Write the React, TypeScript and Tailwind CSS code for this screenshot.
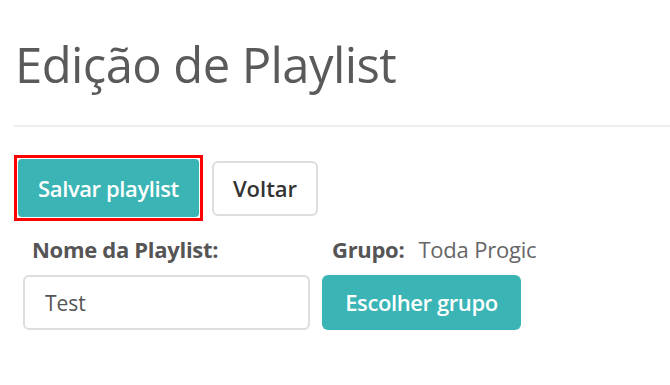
export default function App() {
  return (
    <div
      className="w-[670px] h-[385px] bg-white overflow-hidden text-[#555]"
      style={{ fontFamily: '"Open Sans", "Noto Sans", sans-serif' }}
    >
      <div className="pl-[14px] pt-[36px]">
        <h1 className="text-[49px] leading-[56px] font-normal tracking-[-0.6px] text-[#5a5a5a] pl-[1px]">
          Edição de Playlist
        </h1>
        <hr className="mt-[33px] border-t-2 border-[#eeeeee]" />

        {/* Ações */}
        <div className="flex items-center mt-[28px]">
          <div className="border-[3px] border-[#ff0000] p-px">
            <button className="h-[58px] w-[181px] rounded bg-[#3ab4b4] text-white font-semibold text-[22px] tracking-[-0.4px]">
              Salvar playlist
            </button>
          </div>
          <button className="ml-[9px] h-[55px] w-[106px] rounded-md border-2 border-[#dddddd] bg-white text-[#333] font-semibold text-[22px]">
            Voltar
          </button>
        </div>

        {/* Formulário */}
        <div className="flex mt-[14px] ml-[9px]">
          <div className="w-[299px]">
            <label className="block pl-[9px] text-[22px] font-bold text-[#555] tracking-[-0.3px] leading-[28px]">
              Nome da Playlist:
            </label>
            <input
              defaultValue="Test"
              className="mt-[12px] w-[287px] h-[55px] rounded-md border-2 border-[#dddddd] px-[20px] text-[21px] text-[#555] outline-none"
            />
          </div>
          <div>
            <div className="flex items-baseline pl-[10px] leading-[28px]">
              <span className="text-[22px] font-bold text-[#555] tracking-[-0.3px]">Grupo:</span>
              <span className="ml-[14px] text-[22px] text-[#666] tracking-[-0.2px]">Toda Progic</span>
            </div>
            <button className="mt-[12px] h-[55px] w-[199px] rounded-md bg-[#3ab4b4] text-white font-semibold text-[22px] tracking-[-0.4px]">
              Escolher grupo
            </button>
          </div>
        </div>
      </div>
    </div>
  );
}
